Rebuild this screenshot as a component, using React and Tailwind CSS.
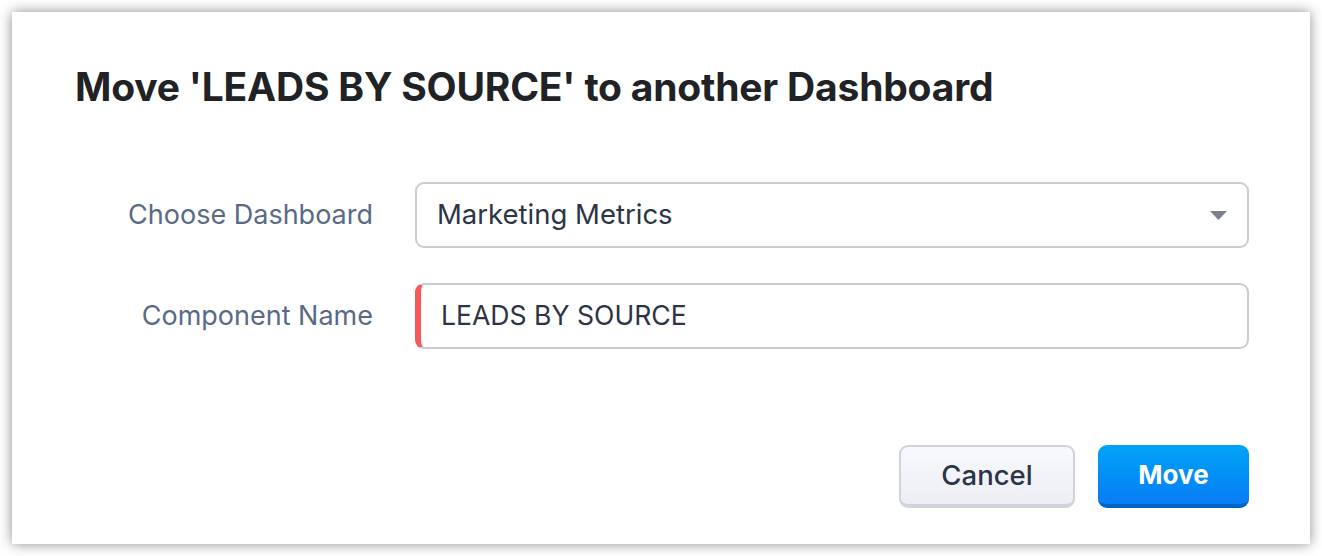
import React, { useState } from "react";

export default function App() {
  const [dashboard] = useState("Marketing Metrics");
  const [name, setName] = useState("LEADS BY SOURCE");

  return (
    <div className="w-[1322px] h-[556px] bg-white p-3" style={{ fontFamily: "Inter, 'Noto Sans', sans-serif" }}>
      <div className="h-[532px] w-[1298px] bg-white shadow-[0_0_12px_rgba(0,0,0,0.45)] flex flex-col pl-[63px] pr-[61px] pt-[52px]">
        <h1 className="text-[39px] leading-[46px] font-bold text-[#202226] tracking-[-0.2px]">
          Move 'LEADS BY SOURCE' to another Dashboard
        </h1>

        <div className="mt-[72px] flex flex-col gap-[35px]">
          <div className="flex items-center">
            <label className="w-[298px] text-right text-[27px] text-[#5a6a86]">Choose Dashboard</label>
            <div className="ml-[42px] flex-1 h-[66px] rounded-[9px] border-2 border-[#c9ccd3] flex items-center justify-between pl-[20px] pr-[20px]">
              <span className="text-[27.5px] text-[#2d3445]">{dashboard}</span>
              <svg width="17" height="9" viewBox="0 0 17 9">
                <path d="M0 0 H17 L8.5 9 Z" fill="#7b808c" />
              </svg>
            </div>
          </div>

          <div className="flex items-center">
            <label className="w-[298px] text-right text-[27px] text-[#5a6a86]">Component Name</label>
            <div className="ml-[42px] flex-1 h-[66px] rounded-[9px] border-2 border-[#c9ccd3] border-l-[6px] border-l-[#f55a58] flex items-center pl-[20px]">
              <input
                className="w-full bg-transparent outline-none text-[26.6px] text-[#2d3445]"
                value={name}
                onChange={(e) => setName(e.target.value)}
              />
            </div>
          </div>
        </div>

        <div className="mt-[96px] flex justify-end gap-[23px]">
          <button className="w-[176px] h-[63px] rounded-[9px] border-2 border-[#cfd3dc] border-b-[4px] bg-gradient-to-b from-[#f8f9fc] to-[#eceef4] text-[27.5px] font-medium text-[#2d3445]">
            Cancel
          </button>
          <button className="w-[151px] h-[63px] rounded-[9px] border-b-[4px] border-[#0063c8] bg-gradient-to-b from-[#04a3f6] to-[#0a7cf5] text-[26px] font-bold text-white">
            Move
          </button>
        </div>
      </div>
    </div>
  );
}
